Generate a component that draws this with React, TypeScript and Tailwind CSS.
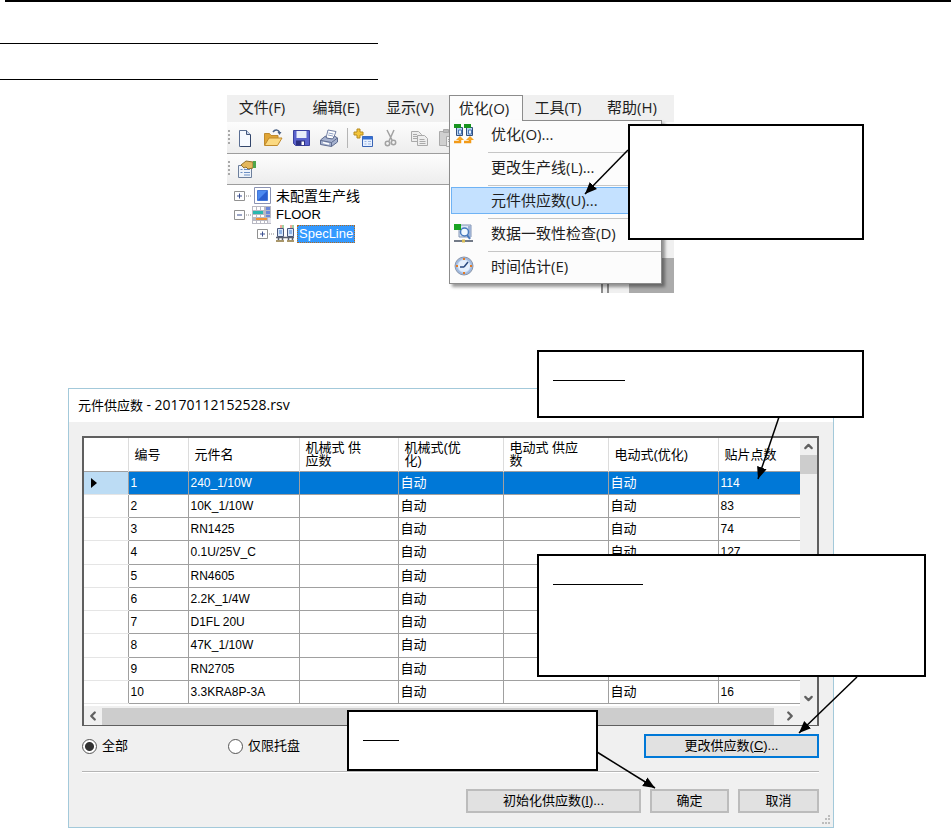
import React, { useState } from 'react';
import { ChevronDown, ChevronLeft, ChevronRight, ChevronUp } from 'lucide-react';

interface SupplyRow {
  no: number;
  name: string;
  points: string;
}

const rows: SupplyRow[] = [
  { no: 1, name: '240_1/10W', points: '114' },
  { no: 2, name: '10K_1/10W', points: '83' },
  { no: 3, name: 'RN1425', points: '74' },
  { no: 4, name: '0.1U/25V_C', points: '127' },
  { no: 5, name: 'RN4605', points: '' },
  { no: 6, name: '2.2K_1/4W', points: '' },
  { no: 7, name: 'D1FL 20U', points: '' },
  { no: 8, name: '47K_1/10W', points: '' },
  { no: 9, name: 'RN2705', points: '' },
  { no: 10, name: '3.3KRA8P-3A', points: '16' },
];

const headers = ['编号', '元件名', '机械式 供应数', '机械式(优化)', '电动式 供应数', '电动式(优化)', '贴片点数'];

const NewIcon = () => (
  <svg className="h-5 w-5" viewBox="0 0 20 20">
    <path d="M4.5 2.5h7l4 4v12h-11z" fill="#f7faff" stroke="#5b6f93" />
    <path d="M11.5 2.5v4h4" fill="#c9d6ee" stroke="#42567c" />
    <path d="M15.5 7v11.5h-10" fill="none" stroke="#33466b" />
  </svg>
);

const OpenIcon = () => (
  <svg className="h-5 w-5" viewBox="0 0 20 20">
    <path d="M1.5 17V5.5h5l1.5 2h7v3" fill="#e0a536" stroke="#c08a2c" />
    <path d="M1.5 17.5 6 10h13l-4.5 7.500z" fill="#fbd981" stroke="#c08a2c" />
    <path d="M10 4c2-3 5-2.500 6.500 0" fill="none" stroke="#4a6186" strokeWidth="1.5" />
    <path d="M14.5 4h4l-2 3z" fill="#4a6186" />
  </svg>
);

const SaveIcon = () => (
  <svg className="h-5 w-5" viewBox="0 0 20 20">
    <path d="M2.5 2.5h16v15h-14l-2-2z" fill="#5a62cc" stroke="#3c419f" />
    <path d="M5.5 3h10v7h-10z" fill="#e9edf9" />
    <path d="M5 12.5h9v5H5z" fill="#2c3080" />
    <path d="M10.5 13.5h2.500v3.500h-2.500z" fill="#fff" />
  </svg>
);

const PrintIcon = () => (
  <svg className="h-5 w-5" viewBox="0 0 20 20">
    <path d="m7 10 2-8 8 1.500-3 8z" fill="#fff" stroke="#7280a5" />
    <path d="m9.500 5 5 1M9 7l5 1" stroke="#8fa0c4" />
    <path d="m1.500 12 5-4 1 2 6 1 2-3 3 2v4l-6 4.500-11-2z" fill="#a6b2cf" stroke="#5f6c90" />
    <path d="m2 12.500 10.500 2 6-4.500M12.500 14.500v4" fill="none" stroke="#5f6c90" />
    <path d="m4 14.500 6 1.500" stroke="#fff" strokeWidth="1.5" />
  </svg>
);

const AddWindowIcon = () => (
  <svg className="h-5 w-5" viewBox="0 0 20 20">
    <path d="M4 1h3v3h3v3H7v3H4V7H1V4h3z" fill="#f4c53a" stroke="#b58a1e" />
    <path d="M9.500 8.500h10v10h-10z" fill="#e8f1ff" stroke="#3a65b5" />
    <path d="M9.500 8.500h10v3h-10z" fill="#346fd2" />
    <path d="M11.500 13.500h2M11.500 16h2M15 13.500h3M15 16h3" stroke="#9db7e2" />
  </svg>
);

const CutIcon = () => (
  <svg className="h-5 w-5" viewBox="0 0 20 20" fill="none" stroke="#a2a2a2" strokeWidth="1.5">
    <path d="m6 2 5.500 11M13 2 8 13" />
    <circle cx="6.500" cy="15.500" r="2.200" />
    <circle cx="12.500" cy="14.500" r="2.200" />
  </svg>
);

const CopyIcon = () => (
  <svg className="h-5 w-5" viewBox="0 0 20 20" fill="#eee" stroke="#aaa">
    <path d="M2.500 3.500h7l3 3v7h-10z" />
    <path d="M8.500 7.500h7l3 3v7h-10z" />
    <path d="M4 6.500h4M4 8.500h4M4 10.500h4M10.500 11.500h5M10.500 13.500h6M10.500 15.500h6" />
  </svg>
);

const PasteIcon = () => (
  <svg className="h-5 w-5" viewBox="0 0 20 20" fill="#d0d0d0" stroke="#aaa">
    <path d="M2.500 3.500h13v14h-13z" />
    <path d="M6.500 1.500h5v3h-5z" fill="#bbb" />
    <path d="M9.500 8.500h9v10h-9z" fill="#f2f2f2" />
    <path d="M11 11.500h5M11 13.500h5" />
  </svg>
);

const PropertiesIcon = () => (
  <svg className="h-5 w-5" viewBox="0 0 20 20">
    <path d="M1.500 6.500h13v12h-13z" fill="#eef3fa" stroke="#6d7f9c" />
    <path d="M3.500 10.500h2M3.500 13.500h2M7 10.500h6M7 13.500h6M7 16h6" stroke="#6b8fc4" />
    <path d="m4 6 5-4 7 1v6l-5 1-2-2-2 1z" fill="#e3b75c" stroke="#93702a" />
    <path d="M16 2h3v7h-3z" fill="#4fa54b" />
  </svg>
);

const LineIcon = () => (
  <svg className="h-5 w-5" viewBox="0 0 20 20">
    <path d="M2.500 1.500h16v16h-16z" fill="#fff" stroke="#8b93b3" />
    <path d="M5.500 4.500h10v10h-10z" fill="#4d8af0" stroke="#4377d8" />
    <path d="M15 5v9H6z" fill="#2b5fd0" />
  </svg>
);

const FloorIcon = () => (
  <svg className="h-5 w-5" viewBox="0 0 20 20">
    <path d="M0 1h19v18H0z" fill="#b9b9c3" />
    <path d="M1 2h3v3H1zM5 2h3v3H5zM9 2h3v3H9zM1 10h3v2H1zM5 10h3v2H5zM9 10h3v2H9zM1 16h3v2H1zM5 16h3v2H5zM9 16h3v2H9zM13 16h2v2h-2z" fill="#fff" />
    <path d="M1 6h10v3H1z" fill="#29b7ae" />
    <path d="M4 13h11v2H4z" fill="#f09235" />
    <path d="M14 2h4v3h-4zM14 6h4v3h-4zM14 10h4v2h-4z" fill="#6b87d9" />
    <path d="M16 13h3v5h-3z" fill="#e4e4ec" />
  </svg>
);

const MachineIcon = () => (
  <svg className="h-5 w-5" viewBox="0 0 20 20">
    <path d="M2.500 4.500h6v8h-6zM12.500 4.500h6v8h-6z" fill="#d8e7fa" stroke="#48577c" />
    <path d="M4 6h3v4H4zM14 6h3v4h-3z" fill="#8fb3e6" />
    <path d="M1 13.500h18M3.500 13v3M7.500 13v3M13.500 13v3M17.500 13v3" stroke="#59606f" strokeWidth="1.5" />
    <path d="M1 17h8M12 17h7" stroke="#a8966a" strokeWidth="2" />
    <path d="M6 1v3M16 1v3" stroke="#e2522e" />
    <path d="M8 1v3M18 1v3" stroke="#3fa545" />
  </svg>
);

const OptimizeIcon = () => (
  <svg className="h-5 w-5" viewBox="0 0 20 20">
    <path d="M2.500 3.500h6v8h-6zM12.500 3.500h6v8h-6z" fill="#b9d5f2" stroke="#34507e" />
    <path d="M4.500 6h3v4h-3zM14.500 6h3v4h-3z" fill="#e6f2ff" stroke="#4b77b5" />
    <path d="M0 0h7v4H0zM10 0h7v4h-7z" fill="#18941f" />
    <path d="M0 18h6v-3M10 18h6v-3" fill="none" stroke="#f29a18" strokeWidth="2.5" />
    <path d="m2 16 4-4 4 4zM12 16l4-4 4 4z" fill="#f5a524" />
  </svg>
);

const CheckIcon = () => (
  <svg className="h-5 w-5" viewBox="0 0 20 20">
    <path d="M5 2h12v12H5z" fill="#dbe6f5" stroke="#8294b4" />
    <path d="M14 3h3v11h-3z" fill="#9db1d3" />
    <circle cx="10.500" cy="9" r="4" fill="#eff8ff" stroke="#4679bd" strokeWidth="1.5" />
    <path d="m13 12 3 4" stroke="#4679bd" strokeWidth="2" />
    <path d="M0 1h7v6H0z" fill="#18a321" />
    <path d="M0 18h19" stroke="#727a87" strokeWidth="2" />
    <path d="M8 18h3" stroke="#d8bd55" strokeWidth="3" />
  </svg>
);

const ClockIcon = () => (
  <svg className="h-5 w-5" viewBox="0 0 20 20">
    <circle cx="10" cy="10" r="9" fill="#9fb9de" stroke="#8b96aa" />
    <circle cx="10" cy="10" r="6.500" fill="#e4effd" stroke="#bdd1ee" />
    <path d="M10 11 14 6M10 11H6" stroke="#2a4a80" strokeWidth="1.5" />
    <path d="M10 2v2M10 16v2M2 10h2M16 10h2" stroke="#e27a25" strokeWidth="2" />
  </svg>
);

const Grip = () => (
  <svg className="h-5 w-1 shrink-0" viewBox="0 0 4 20">
    <path d="M1 2h2v2H1zM1 6h2v2H1zM1 10h2v2H1zM1 14h2v2H1z" fill="#a9a9a9" />
  </svg>
);

const Expander = ({ open = false }: { open?: boolean }) => (
  <svg className="h-3 w-[18px] shrink-0" viewBox="0 0 18 12">
    <path d="M.5 1.500h10v9H.5z" fill="#fff" stroke="#919191" />
    <path d="M3 6h5" stroke="#3b4f8f" />
    {!open && <path d="M5.500 3.500v5" stroke="#3b4f8f" />}
    <path d="M12 6h6" stroke="#888" strokeDasharray="1 1" />
  </svg>
);

const toolbar = [
  { label: '新建', icon: <NewIcon /> },
  { label: '打开', icon: <OpenIcon /> },
  { label: '保存', icon: <SaveIcon /> },
  { label: '打印', icon: <PrintIcon /> },
  { label: '添加', icon: <AddWindowIcon /> },
  { label: '剪切', icon: <CutIcon /> },
  { label: '复制', icon: <CopyIcon /> },
  { label: '粘贴', icon: <PasteIcon /> },
];

const menus = ['文件(F)', '编辑(E)', '显示(V)', '优化(O)', '工具(T)', '帮助(H)'];

const menuItems = [
  { label: '优化(O)...', icon: <OptimizeIcon /> },
  { label: '更改生产线(L)...', icon: null },
  { label: '元件供应数(U)...', icon: null },
  { label: '数据一致性检查(D)', icon: <CheckIcon /> },
  { label: '时间估计(E)', icon: <ClockIcon /> },
];

const EditorWindow = () => (
  <section className="relative mt-[15px] ml-[227px] max-w-[447px] font-['Open_Sans','Noto_Sans_CJK_SC',sans-serif] text-[15px] text-[#1e1e1e]">
    <div className="h-[198px] overflow-hidden bg-white">
      <nav className="flex h-[27px] bg-[#f0f0f0]">
        {menus.map((menu) => (
          <button
            key={menu}
            className={`w-[74px] shrink-0 pr-1 pb-1 whitespace-nowrap leading-6 ${
              menu === '优化(O)' ? 'border border-b-0 border-[#8c8c8c] bg-[#fcfcfc]' : ''
            }`}
          >
            {menu}
          </button>
        ))}
      </nav>
      <div className="flex h-8 items-center gap-2 border-b border-[#9d9d9d] bg-linear-to-b from-[#fdfdfd] to-[#ededed]">
        <span className="-mr-1 flex">
          <Grip />
        </span>
        {toolbar.map(({ label, icon }) => (
          <React.Fragment key={label}>
            {label === '添加' && <span className="-mr-[3px] h-5 w-px bg-[#b5b5b5]" />}
            <button aria-label={label} className="shrink-0">
              {icon}
            </button>
          </React.Fragment>
        ))}
      </div>
      <div className="flex h-[31px] items-center gap-[6px] border-b border-[#9d9d9d] bg-linear-to-b from-[#fdfdfd] to-[#ededed]">
        <Grip />
        <button aria-label="属性">
          <PropertiesIcon />
        </button>
      </div>
      <div className="flex">
        <ul className="flex-1 pt-px pl-[7px] font-['Liberation_Sans','Noto_Sans_CJK_SC',sans-serif] text-[13px] text-black">
          <li className="flex h-[19px] items-center">
            <Expander />
            <LineIcon />
            <span className="ml-1 text-sm leading-4">未配置生产线</span>
          </li>
          <li className="flex h-[19px] items-center">
            <Expander open />
            <FloorIcon />
            <span className="ml-1">FLOOR</span>
          </li>
          <li className="flex h-[19px] items-center pl-[23px]">
            <Expander />
            <MachineIcon />
            <span className="ml-[2px] border border-dotted border-[#b06a20] bg-[#3399ff] px-px leading-4 text-white">
              SpecLine
            </span>
          </li>
        </ul>
        <div className="flex h-[108px] w-[73px] bg-[#f0f0f0]">
          <div className="w-2 border-x-2 border-[#8c8c8c]" />
          <div className="mt-[73px] ml-5 flex-1 bg-[#ababab]" />
        </div>
      </div>
    </div>

    <ul className="absolute top-[25px] left-[222px] w-[213px] border border-[#8c8c8c] bg-[#fcfcfc] shadow-[3px_3px_3px_#0006]">
      {/* keeps the open tab joined to its menu */}
      <li aria-hidden="true" className="absolute -top-px left-0 h-px w-[72px] bg-[#fcfcfc]" />
      {menuItems.map(({ label, icon }, i) => (
        <li key={label} className={i === 4 ? 'h-[30px]' : 'h-[33px]'}>
          <button
            className={`mx-px flex h-[27px] w-[209px] items-center border pb-[2px] pl-[2px] text-left ${
              i === 2 ? 'border-[#6fb3f5] bg-[#c4e1ff]' : 'border-transparent'
            }`}
          >
            <span className="w-[37px]">{icon}</span>
            <span className="whitespace-nowrap leading-6">{label}</span>
          </button>
          {i < 4 && <div className="mt-1 ml-[38px] h-px bg-[#c6c6c6]" />}
        </li>
      ))}
    </ul>
  </section>
);

const SupplyTable = () => (
  <div className="border-2 border-b border-[#5f5f5f] bg-[#f0f0f0]">
    <div className="flex">
      <div className="h-[268px] flex-1 overflow-hidden bg-white">
        <table className="h-[266px] w-full table-fixed border-collapse text-left">
          <colgroup>
            <col className="w-[44px]" />
            <col className="w-[60px]" />
            <col className="w-[111px]" />
            <col className="w-[99px]" />
            <col className="w-[105px]" />
            <col className="w-[105px]" />
            <col className="w-[110px]" />
            <col />
          </colgroup>
          <thead>
            <tr className="h-[33px] border-b border-[#a0a0a0]">
              <th className="border-r border-[#dcdcdc]" />
              {headers.map((header) => (
                <th
                  key={header}
                  className="border-r border-[#dcdcdc] pr-[26px] pl-[6px] text-[13px] leading-[13px] font-normal last:border-r-0 last:pr-0"
                >
                  {header}
                </th>
              ))}
            </tr>
          </thead>
          <tbody className="text-xs">
            {rows.map(({ no, name, points }) => {
              const selected = no === 1;
              const auto = <span className="text-[13px]">自动</span>;
              return (
                <tr key={no} className={selected ? 'bg-[#0078d7] text-white' : ''}>
                  <td className={`border-r border-b border-r-[#a0a0a0] border-b-[#e5e5e5] pl-[7px] ${selected ? 'bg-[#bcdcf4]' : ''}`}>
                    {selected && (
                      <svg className="h-[10px] w-[6px]" viewBox="0 0 6 10">
                        <path d="M0 0v10l6-5z" fill="#000" />
                      </svg>
                    )}
                  </td>
                  {[no, name, '', auto, '', auto, points].map((value, i) => (
                    <td
                      key={i}
                      className="overflow-hidden border-r border-b border-[#a0a0a0] pl-[2px] leading-4 whitespace-nowrap last:border-r-0"
                    >
                      {value}
                    </td>
                  ))}
                </tr>
              );
            })}
          </tbody>
        </table>
      </div>
      <div className="flex w-[17px] flex-col items-center text-[#606060]">
        <ChevronUp className="my-[2px] h-[13px] w-[13px]" strokeWidth={4} />
        <div className="h-[19px] w-full bg-[#cdcdcd]" />
        <ChevronDown className="mt-auto mb-[1px] h-[13px] w-[13px]" strokeWidth={4} />
      </div>
    </div>
    <div className="flex h-[19px] items-center pt-px text-[#606060]">
      <ChevronLeft className="mx-[2px] h-[14px] w-[14px]" strokeWidth={4} />
      <div className="mr-[9px] h-[17px] flex-1 bg-[#cdcdcd]" />
      <ChevronRight className="mr-[20px] h-[14px] w-[14px]" strokeWidth={4} />
    </div>
  </div>
);

const SupplyDialog = () => {
  const [scope, setScope] = useState('all');
  const radio =
    'h-[15px] w-[15px] appearance-none rounded-full border border-[#555] bg-white checked:bg-[radial-gradient(circle,#333_4px,#fff_5px)]';
  const button = 'h-6 border-2 border-[#bcbcbc] bg-[#e1e1e1] leading-5';

  return (
    <section className="mt-[95px] mr-[117px] ml-[68px] border border-[#a3c9da] bg-[#f0f0f0] font-['Liberation_Sans','Noto_Sans_CJK_SC',sans-serif] text-[13px] text-black">
      <h2 className="h-[33px] bg-white pl-[9px] font-['Open_Sans','Noto_Sans_CJK_SC',sans-serif] leading-8">
        元件供应数 <span className="text-sm">- 20170112152528.rsv</span>
      </h2>
      <div className="relative pt-[14px] pr-[14px] pb-[14px] pl-[13px]">
        <SupplyTable />
        <div className="mt-[8px] flex h-6 items-center">
          <label className="flex w-[146px] items-center gap-[5px]">
            <input type="radio" name="scope" className={radio} checked={scope === 'all'} onChange={() => setScope('all')} />
            全部
          </label>
          <label className="flex items-center gap-[5px]">
            <input type="radio" name="scope" className={radio} checked={scope === 'tray'} onChange={() => setScope('tray')} />
            仅限托盘
          </label>
          <button className="ml-auto h-6 w-[175px] border-2 border-[#0078d7] bg-[#e1e1e1] leading-5">
            更改供应数(<u>C</u>)...
          </button>
        </div>
        <hr className="mt-[13px] h-[2px] border-t border-b border-t-[#b5b5b5] border-b-white" />
        <div className="mt-[16px] flex justify-end gap-[9px]">
          <button className={`${button} w-[175px]`}>
            初始化供应数(<u>I</u>)...
          </button>
          <button className={`${button} w-[79px]`}>确定</button>
          <button className={`${button} w-[81px]`}>取消</button>
        </div>
        <svg className="absolute right-[2px] bottom-[2px] h-[10px] w-[10px]" viewBox="0 0 10 10">
          <path d="M7 0h2v2H7zM4 3h2v2H4zM7 3h2v2H7zM1 7h2v2H1zM4 7h2v2H4zM7 7h2v2H7z" fill="#bdbdbd" />
        </svg>
      </div>
    </section>
  );
};

const Callouts = () => (
  <>
    <div className="absolute top-[124px] left-[628px] h-[116px] w-[236px] border-2 border-black bg-white" />
    <div className="absolute top-[350px] left-[537px] h-[68px] w-[327px] border-2 border-black bg-white pt-[28px] pl-[14px]">
      <div className="h-px w-[72px] bg-black" />
    </div>
    <div className="absolute top-[554px] left-[537px] h-[123px] w-[389px] border-2 border-black bg-white pt-[28px] pl-[14px]">
      <div className="h-px w-[90px] bg-black" />
    </div>
    <div className="absolute top-[710px] left-[347px] h-[61px] w-[251px] border-2 border-black bg-white pt-[28px] pl-[14px]">
      <div className="h-px w-[36px] bg-black" />
    </div>
    <svg className="pointer-events-none absolute top-0 left-0 h-[828px] w-[951px]" viewBox="0 0 951 828">
      <defs>
        <marker id="head" viewBox="0 0 12 10" refX="12" refY="5" markerWidth="12" markerHeight="11" markerUnits="userSpaceOnUse" orient="auto">
          <path d="M0 0v10l12-5z" />
        </marker>
      </defs>
      <g stroke="#000" strokeWidth="1.5">
        <path d="M628 150 585 194" markerEnd="url(#head)" />
        <path d="M779 417 758 479" markerEnd="url(#head)" />
        <path d="M857 677 799 733" markerEnd="url(#head)" />
        <path d="M597 752 655 788" markerEnd="url(#head)" />
      </g>
    </svg>
  </>
);

export default function App() {
  return (
    <main className="relative bg-white">
      <div className="ml-[5px] h-[2px] bg-black" />
      <div className="mt-[41px] h-[37px] w-[378px] border-y border-black" />
      <EditorWindow />
      <SupplyDialog />
      <Callouts />
    </main>
  );
}
